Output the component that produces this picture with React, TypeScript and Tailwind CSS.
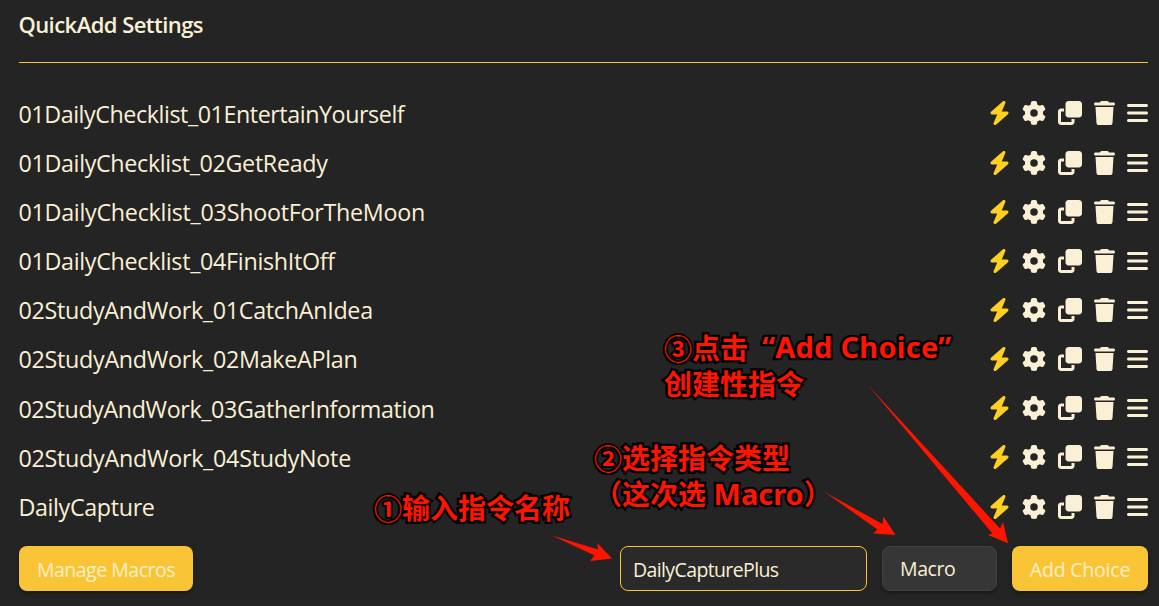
import React from "react";
import { FaBolt, FaGear, FaClone, FaTrash, FaBars } from "react-icons/fa6";

const choices = [
  { name: "01DailyChecklist_01EntertainYourself", tracking: "tracking-[-0.44px]" },
  { name: "01DailyChecklist_02GetReady", tracking: "tracking-[-0.33px]" },
  { name: "01DailyChecklist_03ShootForTheMoon", tracking: "tracking-[-0.27px]" },
  { name: "01DailyChecklist_04FinishItOff", tracking: "tracking-[-0.3px]" },
  { name: "02StudyAndWork_01CatchAnIdea", tracking: "tracking-[-0.29px]" },
  { name: "02StudyAndWork_02MakeAPlan", tracking: "tracking-[-0.28px]" },
  { name: "02StudyAndWork_03GatherInformation", tracking: "tracking-[-0.4px]" },
  { name: "02StudyAndWork_04StudyNote", tracking: "tracking-[-0.27px]" },
  { name: "DailyCapture", tracking: "tracking-[-0.35px]" },
];

const noteClass =
  "absolute whitespace-pre font-['Noto_Sans','Noto_Sans_CJK_SC',sans-serif] text-[28px] leading-[37px] font-bold text-[#ff1400] [-webkit-text-stroke:4.5px_#000] [paint-order:stroke_fill] [stroke-linejoin:round]";

function Step({ children }: { children: string }) {
  return (
    <span className="relative top-px [-webkit-text-stroke:1.2px_#ff1400] [text-shadow:2px_0_#000,-2px_0_#000,0_2px_#000,0_-2px_#000,1.5px_1.5px_#000,-1.5px_1.5px_#000,1.5px_-1.5px_#000,-1.5px_-1.5px_#000]">
      {children}
    </span>
  );
}

function ChoiceRow({ name, tracking }: { name: string; tracking: string }) {
  return (
    <li className="flex h-[49.15px] items-center justify-between">
      <span className={"-ml-[0.6px] pb-[1.6px] text-[23.3px] leading-8 whitespace-nowrap " + tracking}>{name}</span>
      <span className="flex items-center gap-3 pb-[2.4px]">
        <FaBolt className="h-6 w-[21px] text-[#ffd021]" />
        <FaGear className="size-6" />
        <FaClone className="size-6" />
        <FaTrash className="h-6 w-[21px]" />
        <FaBars className="h-6 w-[21px]" />
      </span>
    </li>
  );
}

export default function App() {
  return (
    <main className="relative h-[606px] w-[1159px] overflow-hidden bg-[#242424] pr-[11px] pl-[19px] font-['Open_Sans','Noto_Sans',sans-serif] text-[#faf0d5]">
      <header className="flex h-[63px] items-start border-b border-[#fbc531] pt-2">
        <h1 className="-ml-[0.6px] text-[22px] leading-8 font-semibold tracking-[-0.54px]">QuickAdd Settings</h1>
      </header>
      <ul className="h-[483px] pt-[27px]">
        {choices.map((c) => (
          <ChoiceRow key={c.name} {...c} />
        ))}
      </ul>
      <footer className="flex h-[45px] items-stretch text-[19.5px] leading-[45px]">
        <button className="w-[174px] rounded-lg bg-[#f9c536] pt-px tracking-[-0.48px] text-[#fdf0cb] shadow-[0_2px_4px_rgba(0,0,0,0.4)]">
          Manage Macros
        </button>
        <input
          defaultValue="DailyCapturePlus"
          className="ml-auto w-[247px] rounded-lg border border-[#fbc531] bg-[#2a2a2a] px-3 pt-[2px] tracking-[-0.62px] outline-none"
        />
        <button className="ml-[15px] w-[115px] rounded-lg border border-[#424242] bg-[#363636] pl-[17px] text-left leading-[43px] tracking-[-0.4px] shadow-[0_2px_3px_rgba(0,0,0,0.35)]">
          Macro
        </button>
        <button className="ml-[15px] w-[136px] rounded-lg bg-[#f9c536] pt-px tracking-[-0.2px] text-[#fdf0cb] shadow-[0_2px_4px_rgba(0,0,0,0.4)]">
          Add Choice
        </button>
      </footer>

      <p className={noteClass + " top-[490px] left-[374px]"}>
        <Step>①</Step>输入指令名称
      </p>
      <p className={noteClass + " top-[440px] left-[594px]"}>
        <Step>②</Step>选择指令类型
      </p>
      <p className={noteClass + " top-[475px] left-[594px]"}>
        （这次选<span className="text-[29px]"> Macro</span>）
      </p>
      <p className={noteClass + " top-[329px] left-[664px]"}>
        <Step>③</Step>点击
        <span className="relative -top-px ml-[14px] text-[29px] tracking-[0.25px]">“Add Choice”</span>
      </p>
      <p className={noteClass + " top-[366px] left-[664px]"}>创建性指令</p>

      <svg className="pointer-events-none absolute inset-0" width="1159" height="606" fill="#ff1400">
        <path d="M552 535.5L594.5 555.5L590 561L612 558.5L597.3 543L598 549.5Z" />
        <path d="M824.5 492L877.5 529.5L873 533.5L895.5 535L883.5 516.5L882.5 524Z" />
        <path d="M867 384L992.5 533.5L988 535L1008 543.3L1003 522L1000 528.5Z" />
      </svg>
    </main>
  );
}
